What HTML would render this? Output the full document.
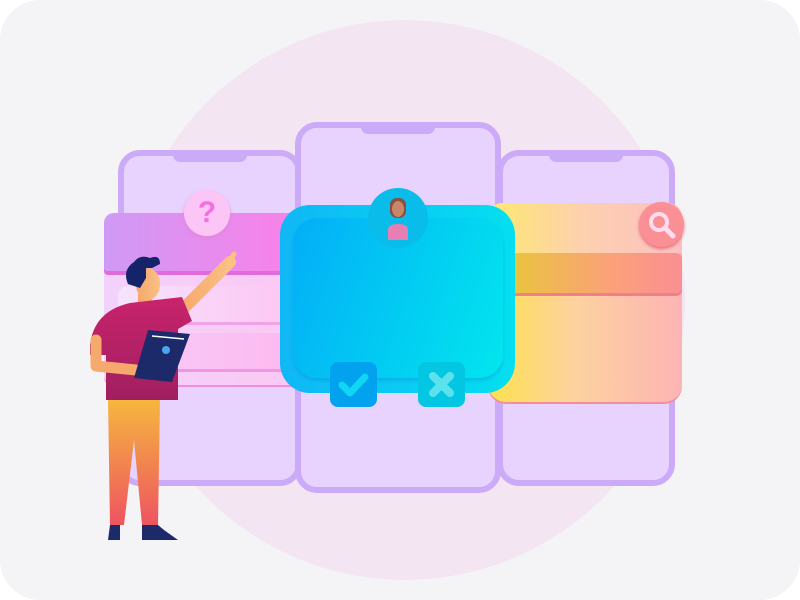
<!DOCTYPE html><html><head><style>
body{margin:0;width:800px;height:600px;background:#fff;overflow:hidden;position:relative;font-family:"Liberation Sans",sans-serif}
.a{position:absolute}
.ph{position:absolute;background:#e7d3fd;border:6px solid #cbaaf8;border-radius:22px;box-sizing:border-box}
.notch{position:absolute;top:-1px;left:50%;width:74px;margin-left:-37px;height:7px;background:#cbaaf8;border-radius:0 0 8px 8px}
</style></head><body>
<div class="a" style="left:0;top:0;width:800px;height:600px;background:#f4f4f6;border-radius:40px"></div>
<div class="a" style="left:125px;top:20px;width:560px;height:560px;border-radius:50%;background:#f3e6f2"></div>
<div class="ph" style="left:118px;top:150px;width:184px;height:336px"><div class="notch"></div></div>
<div class="ph" style="left:497px;top:150px;width:178px;height:336px"><div class="notch"></div></div>
<div class="ph" style="left:295px;top:122px;width:206px;height:371px"><div class="notch"></div></div>
<div class="a" style="left:104px;top:213px;width:198px;height:172px;border-radius:10px;background:linear-gradient(90deg,#f2d2fb,#fbc8f4);box-shadow:0 2px 0 #ee8ee0"></div>
<div class="a" style="left:104px;top:213px;width:198px;height:58px;border-radius:10px 10px 4px 4px;background:linear-gradient(90deg,#cf9af5,#fb80e9);box-shadow:0 4px 0 #e26bdc"></div>
<div class="a" style="left:118px;top:286px;width:184px;height:36px;background:linear-gradient(90deg,#f6e3fc,#fdc4f3);border-radius:10px;box-shadow:0 3px 0 #f0a4e6"></div>
<div class="a" style="left:150px;top:333px;width:152px;height:36px;background:linear-gradient(90deg,#f8c9f6,#fdb8ef);border-radius:6px;box-shadow:0 3px 0 #f196e4"></div>
<div class="a" style="left:184px;top:190px;width:46px;height:46px;border-radius:50%;background:#fbc6f6;box-shadow:0 3px 4px #e488dc;color:#f56ee0;font:bold 30px 'Liberation Sans';text-align:center;line-height:46px">?</div>
<div class="a" style="left:488px;top:203px;width:194px;height:199px;border-radius:18px;background:linear-gradient(90deg,#fde14e,#fdd2a0 45%,#fdb4b4);box-shadow:0 2px 0 #f48d9a"></div>
<div class="a" style="left:488px;top:203px;width:194px;height:50px;border-radius:14px 14px 0 0;background:linear-gradient(90deg,#fde86f,#fdd0b0 50%,#fcc0c0)"></div>
<div class="a" style="left:505px;top:253px;width:177px;height:40px;border-radius:6px;background:linear-gradient(90deg,#e8c73a,#fba17a 60%,#fa8f92);box-shadow:0 3px 0 #f07f8d"></div>
<div class="a" style="left:639px;top:202px;width:45px;height:45px;border-radius:50%;background:#fa8f96;box-shadow:0 2px 3px #e56f7f"></div>
<svg class="a" style="left:644px;top:207px" width="36" height="36"><circle cx="15" cy="15" r="8" fill="none" stroke="#fde" stroke-width="4"/><path d="M21 21l8 8" stroke="#fde" stroke-width="5" stroke-linecap="round"/></svg>
<div class="a" style="left:280px;top:205px;width:235px;height:188px;border-radius:30px;background:linear-gradient(90deg,#10b7f5,#05dff0);"></div>
<div class="a" style="left:293px;top:218px;width:210px;height:160px;border-radius:24px;background:linear-gradient(110deg,#03aef7,#02e6ee);box-shadow:0 3px 3px rgba(0,120,200,.25)"></div>
<div class="a" style="left:368px;top:188px;width:60px;height:60px;border-radius:50%;background:#09bce9"></div>
<svg class="a" style="left:380px;top:192px" width="36" height="48"><path d="M8 48v-10q0-6 10-6q10 0 10 6v10z" fill="#e77fb4"/><rect x="10" y="6" width="16" height="20" rx="7" fill="#8b4f3e"/><ellipse cx="18" cy="17" rx="6" ry="8" fill="#c8866d"/></svg>
<div class="a" style="left:330px;top:362px;width:47px;height:45px;border-radius:8px;background:#02a2ef"></div>
<svg class="a" style="left:330px;top:362px" width="47" height="45"><path d="M12 23l8 8 15-16" fill="none" stroke="#0fd6f1" stroke-width="7" stroke-linecap="round" stroke-linejoin="round"/></svg>
<div class="a" style="left:418px;top:362px;width:47px;height:45px;border-radius:8px;background:#03c6e3"></div>
<svg class="a" style="left:418px;top:362px" width="47" height="45"><path d="M15 14l17 17M32 14l-17 17" stroke="#5ae2ef" stroke-width="8" stroke-linecap="round"/></svg>
<svg class="a" style="left:80px;top:250px" width="170" height="300">
<defs><linearGradient id="p" x1="0" y1="0" x2="0" y2="1"><stop offset="0" stop-color="#f6b83e"/><stop offset="1" stop-color="#ee5460"/></linearGradient>
<linearGradient id="sk" x1="0" y1="0" x2="1" y2="0"><stop offset="0" stop-color="#f7a76d"/><stop offset="1" stop-color="#f9c182"/></linearGradient>
<linearGradient id="sh" x1="0" y1="0" x2="0" y2="1"><stop offset="0" stop-color="#c8236b"/><stop offset="1" stop-color="#a01f60"/></linearGradient></defs>
<path d="M100 62L150 12" stroke="url(#sk)" stroke-width="12" stroke-linecap="round"/>
<path d="M148 14l6-10" stroke="#f9c182" stroke-width="5" stroke-linecap="round"/>
<path d="M28 148l2 127 14 0 10-85 8 85 16 0 2-127z" fill="url(#p)"/>
<rect x="58" y="44" width="14" height="14" fill="#f6a96d"/>
<ellipse cx="68" cy="34" rx="12" ry="16" fill="url(#sk)"/>
<path d="M48 34q-6-14 6-22q6-8 16-4q10-4 10 6l-8 4-6 0 0 10-6 10z" fill="#15246a"/>
<path d="M10 95q4-34 40-42l52-6 10 24-14 8 0 71-72 0 0-45-16 0z" fill="url(#sh)"/>
<path d="M16 90l0 26 40 4" fill="none" stroke="#f6a96d" stroke-width="11" stroke-linecap="round" stroke-linejoin="round"/>
<path d="M68 80l42 4-18 48-38-4z" fill="#1d2a6a"/>
<path d="M72 86l32 3" stroke="#fff" stroke-width="1.5"/>
<circle cx="86" cy="100" r="4" fill="#4aa6ee"/>
<path d="M30 275l-2 15 12 0 0-15zM62 275l0 15 36 0-14-10-6-5z" fill="#1d2a6a"/>
</svg>
</body></html>
